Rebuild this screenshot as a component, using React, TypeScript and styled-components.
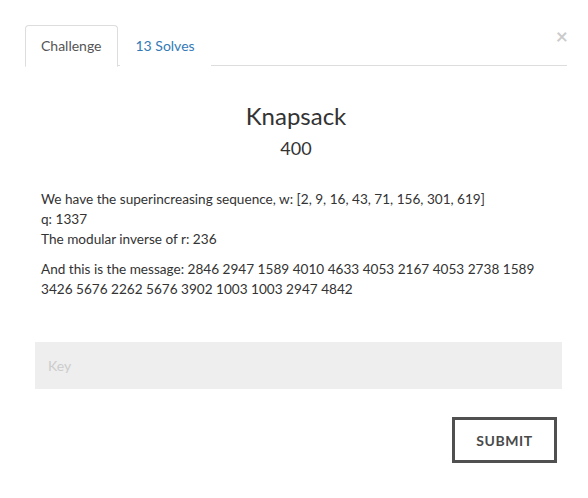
import React from "react";
import styled, { createGlobalStyle } from "styled-components";

const GlobalStyle = createGlobalStyle`
  html, body {
    margin: 0;
    padding: 0;
    background: #ffffff;
  }
  body {
    font-family: Lato, "Open Sans", "Liberation Sans", sans-serif;
    font-size: 14px;
    line-height: 20px;
    color: #333333;
  }
  * { box-sizing: border-box; }
`;

const Modal = styled.div`
  width: 567px;
  padding: 25px 0 0 25px;
`;

const Header = styled.div`
  display: flex;
  align-items: flex-start;
  border-bottom: 1px solid #dddddd;
  height: 41px;
`;

const Tab = styled.a<{ $active?: boolean }>`
  display: block;
  padding: 10px 15px;
  margin-right: 2px;
  font-size: 14px;
  line-height: 20px;
  text-decoration: none;
  cursor: pointer;
  border: 1px solid ${(p) => (p.$active ? "#dddddd" : "transparent")};
  border-bottom-color: transparent;
  border-radius: 4px 4px 0 0;
  background: #ffffff;
  color: ${(p) => (p.$active ? "#555555" : "#337ab7")};
  height: 42px;
`;

const Close = styled.button`
  margin-left: auto;
  margin-top: 0;
  margin-right: -1px;
  padding: 0;
  border: 0;
  background: transparent;
  font-family: Lato, "Liberation Sans", sans-serif;
  font-size: 21px;
  font-weight: 700;
  line-height: 21px;
  color: #000000;
  opacity: 0.2;
  cursor: pointer;
`;

const Title = styled.h3`
  margin: 37px 0 0;
  text-align: center;
  font-size: 24px;
  font-weight: 400;
  line-height: 26px;
  color: #333333;
`;

const Points = styled.h4`
  margin: 9px 0 0;
  text-align: center;
  font-size: 18px;
  font-weight: 400;
  line-height: 20px;
  color: #333333;
`;

const Description = styled.div`
  margin-top: 31px;
  padding: 0 16px;
  font-size: 13.6px;
`;

const Para = styled.p`
  margin: 0 0 10px;
`;

const Form = styled.form`
  margin: 43px 5px 0 10px;
  display: flex;
  flex-direction: column;
  align-items: flex-end;
`;

const KeyInput = styled.input`
  width: 100%;
  height: 47px;
  border: 0;
  outline: none;
  background: #eeeeee;
  padding: 0 13px;
  font-family: Lato, "Liberation Sans", sans-serif;
  font-size: 14px;
  color: #333333;
  &::placeholder {
    color: #cccccc;
  }
`;

const SubmitButton = styled.button`
  margin-top: 28px;
  margin-right: 5px;
  width: 105px;
  height: 46px;
  border: 3px solid #505050;
  background: #ffffff;
  font-family: Lato, "Liberation Sans", sans-serif;
  font-size: 14px;
  font-weight: 700;
  letter-spacing: 0.6px;
  color: #4a4a4a;
  text-transform: uppercase;
  cursor: pointer;
`;

export default function App() {
  return (
    <>
      <GlobalStyle />
      <Modal>
        <Header>
          <Tab $active>Challenge</Tab>
          <Tab>13 Solves</Tab>
          <Close aria-label="Close">×</Close>
        </Header>
        <Title>Knapsack</Title>
        <Points>400</Points>
        <Description>
          <Para>
            We have the superincreasing sequence, w: [2, 9, 16, 43, 71, 156, 301, 619]
            <br />
            q: 1337
            <br />
            The modular inverse of r: 236
          </Para>
          <Para>
            And this is the message: 2846 2947 1589 4010 4633 4053 2167 4053 2738 1589
            3426 5676 2262 5676 3902 1003 1003 2947 4842
          </Para>
        </Description>
        <Form onSubmit={(e) => e.preventDefault()}>
          <KeyInput placeholder="Key" />
          <SubmitButton type="submit">Submit</SubmitButton>
        </Form>
      </Modal>
    </>
  );
}
